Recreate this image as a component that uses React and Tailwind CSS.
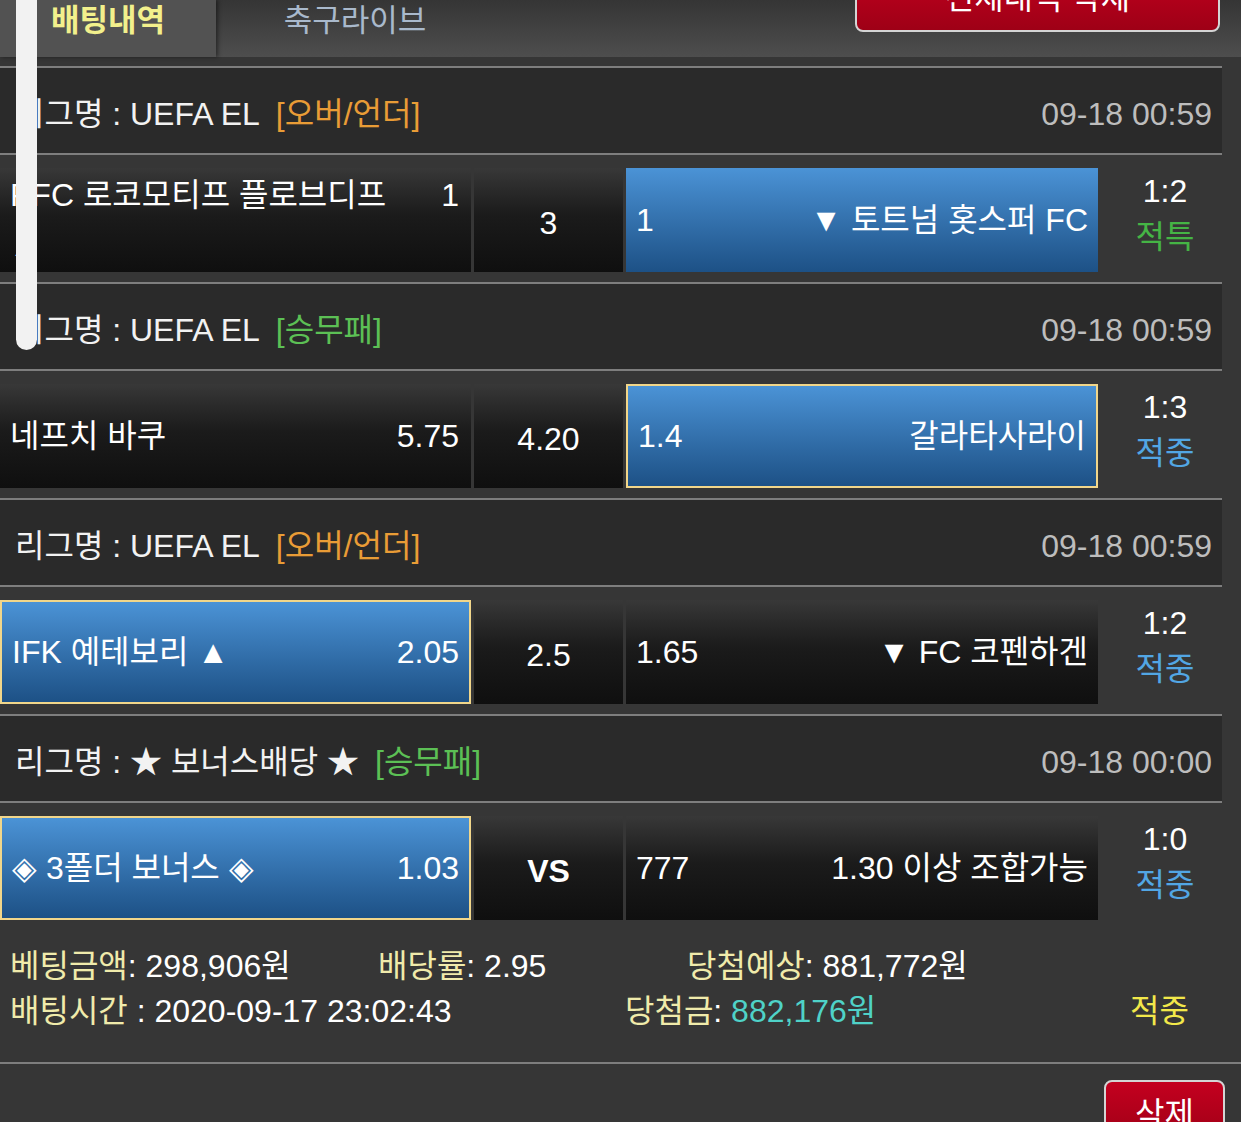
import React from "react";

const bets = [
  {
    league: "UEFA EL",
    type: "[오버/언더]",
    typeColor: "text-[#e99c36]",
    date: "09-18 00:59",
    home: { name: ["PFC 로코모티프 플로브디프", "▲"], odds: "1", sel: false, border: false },
    draw: "3",
    drawBold: false,
    away: { odds: "1", name: "▼ 토트넘 홋스퍼 FC", sel: true, border: false },
    score: "1:2",
    result: "적특",
    resultColor: "text-[#45b445]",
  },
  {
    league: "UEFA EL",
    type: "[승무패]",
    typeColor: "text-[#5cc055]",
    date: "09-18 00:59",
    home: { name: ["네프치 바쿠"], odds: "5.75", sel: false, border: false },
    draw: "4.20",
    drawBold: false,
    away: { odds: "1.4", name: "갈라타사라이", sel: true, border: true },
    score: "1:3",
    result: "적중",
    resultColor: "text-[#52a6e4]",
  },
  {
    league: "UEFA EL",
    type: "[오버/언더]",
    typeColor: "text-[#e99c36]",
    date: "09-18 00:59",
    home: { name: ["IFK 예테보리 ▲"], odds: "2.05", sel: true, border: true },
    draw: "2.5",
    drawBold: false,
    away: { odds: "1.65", name: "▼ FC 코펜하겐", sel: false, border: false },
    score: "1:2",
    result: "적중",
    resultColor: "text-[#52a6e4]",
  },
  {
    league: "★ 보너스배당 ★",
    type: "[승무패]",
    typeColor: "text-[#5cc055]",
    date: "09-18 00:00",
    home: { name: ["◈ 3폴더 보너스 ◈"], odds: "1.03", sel: true, border: true },
    draw: "VS",
    drawBold: true,
    away: { odds: "777", name: "1.30 이상 조합가능", sel: false, border: false },
    score: "1:0",
    result: "적중",
    resultColor: "text-[#52a6e4]",
  },
];

function cellClass(sel, border) {
  const bg = sel
    ? "bg-linear-to-b from-[#4b93d6] to-[#1d5186]"
    : "bg-linear-to-b from-[#383838] via-[#1b1b1b] via-45% to-[#0f0f0f]";
  const b = border ? "border-2 border-[#f1d68a]" : "";
  return `${bg} ${b}`;
}

function Bet({ b }) {
  return (
    <div>
      <div className="h-[2px] bg-[#7e7e7e]" />
      <div className="h-[85px] bg-[#2a2a2a] flex items-center justify-between pl-[15px] pr-[10px] pt-[6px]">
        <div className="flex items-center">
          <span className="text-[#f2f2f2]">리그명 : {b.league}</span>
          <span className={`${b.typeColor} ml-[16px]`}>{b.type}</span>
        </div>
        <span className="text-[#bdbdbd]">{b.date}</span>
      </div>
      <div className="h-[2px] bg-[#7e7e7e]" />
      <div className="h-[127px] pt-[13px] pb-[10px] flex">
        <div
          className={`w-[471px] h-full flex items-center justify-between ${
            b.home.border ? "pl-[10px] pr-[10px]" : "pl-[10px] pr-[12px]"
          } ${cellClass(b.home.sel, b.home.border)}`}
        >
          {b.home.name.length > 1 ? (
            <div className="flex w-full justify-between items-start">
              <div className="leading-[52px] pt-[2px]">
                {b.home.name.map((n, i) => (
                  <div key={i} className={i > 0 ? "text-[27px]" : ""}>
                    {n}
                  </div>
                ))}
              </div>
              <span className="leading-[52px] pt-[2px]">{b.home.odds}</span>
            </div>
          ) : (
            <>
              <span>{b.home.name[0]}</span>
              <span>{b.home.odds}</span>
            </>
          )}
        </div>
        <div
          className={`ml-[3px] w-[149px] h-full flex items-center justify-center pt-[5px] ${cellClass(
            false,
            false
          )} ${b.drawBold ? "font-bold" : ""}`}
        >
          {b.draw}
        </div>
        <div
          className={`ml-[3px] w-[472px] h-full flex items-center justify-between pl-[10px] pr-[10px] ${cellClass(
            b.away.sel,
            b.away.border
          )}`}
        >
          <span>{b.away.odds}</span>
          <span>{b.away.name}</span>
        </div>
        <div className="flex-1 h-full flex flex-col items-center justify-center leading-[46px] pb-[12px] pl-[10px]">
          <span className="text-white">{b.score}</span>
          <span className={b.resultColor}>{b.result}</span>
        </div>
      </div>
    </div>
  );
}

export default function App() {
  return (
    <div className="relative w-[1241px] h-[1122px] overflow-hidden bg-[#363636] text-white text-[32px] font-['Liberation_Sans','Noto_Sans_CJK_KR',sans-serif]">
      {/* top tab bar */}
      <div className="h-[57px] flex bg-linear-to-b from-[#353535] to-[#4e4e4e]">
        <div className="w-[216px] h-full flex items-center justify-center pb-[14px] bg-[#525252] shadow-[2px_0_4px_rgba(0,0,0,0.45)]">
          <span className="font-bold text-[#f2f08c] text-[31px]">배팅내역</span>
        </div>
        <div className="w-[278px] h-full flex items-center justify-center pb-[14px]">
          <span className="text-[#a9b9cc] text-[31px]">축구라이브</span>
        </div>
        <div className="ml-auto mr-[21px] -mt-[36px] w-[365px] h-[68px] rounded-[8px] border-2 border-[#d4d4d4] bg-linear-to-b from-[#c4001f] to-[#9e0016] flex items-center justify-center">
          <span className="text-white text-[32px]">전체내역 삭제</span>
        </div>
      </div>

      {/* list */}
      <div className="mt-[9px] w-[1222px]">
        {bets.map((b, i) => (
          <Bet key={i} b={b} />
        ))}
      </div>

      {/* summary */}
      <div className="h-[132px] pt-[14px] pl-[10px] leading-[45px]">
        <div className="flex">
          <div className="w-[368px]">
            <span className="text-[#f0ebab]">베팅금액</span>: 298,906원
          </div>
          <div className="w-[309px]">
            <span className="text-[#f0ebab]">배당률</span>: 2.95
          </div>
          <div>
            <span className="text-[#f0ebab]">당첨예상</span>: 881,772원
          </div>
        </div>
        <div className="flex">
          <div className="w-[615px]">
            <span className="text-[#f0ebab]">배팅시간</span> : 2020-09-17 23:02:43
          </div>
          <div className="w-[505px]">
            <span className="text-[#f0ebab]">당첨금</span>: <span className="text-[#4fd2c8]">882,176원</span>
          </div>
          <div className="text-[#f2e84a]">적중</div>
        </div>
      </div>
      <div className="h-[2px] bg-[#7e7e7e]" />
      <div className="flex justify-end pr-[16px] pt-[16px]">
        <div className="w-[121px] h-[64px] rounded-[8px] border-2 border-[#d4d4d4] bg-linear-to-b from-[#c4001f] to-[#9e0016] flex items-start justify-center pt-[8px]">
          <span className="text-white">삭제</span>
        </div>
      </div>

      {/* overlay scrollbar */}
      <div className="absolute left-[16px] top-0 w-[21px] h-[350px] rounded-b-full bg-[#f2f2f2] z-10" />
    </div>
  );
}
